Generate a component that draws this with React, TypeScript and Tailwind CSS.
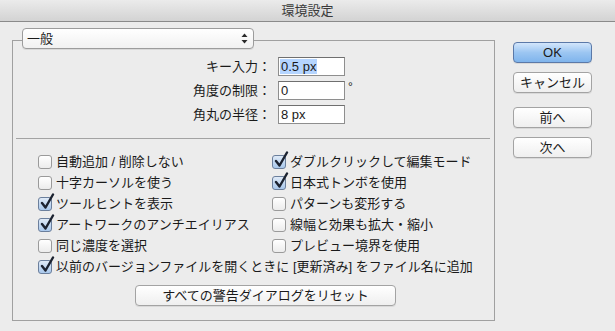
import React from 'react';

const FONT = '"Liberation Sans", "Noto Sans CJK JP", sans-serif';

const Check: React.FC<{ checked?: boolean }> = ({ checked }) => (
  <span
    className={`relative inline-block w-[14px] h-[14px] shrink-0 rounded-[3px] border ${
      checked
        ? 'border-[#6b7f9c] bg-gradient-to-b from-[#dfeaf7] to-[#a9c8ec]'
        : 'border-[#9a9a9a] bg-gradient-to-b from-white to-[#ececec]'
    }`}
  >
    {checked && (
      <svg className="absolute left-[1px] -top-[5px]" width="15" height="17" viewBox="0 0 15 17">
        <path d="M2 10 L5.5 14.5 L13 1.5" fill="none" stroke="#1b2230" strokeWidth="2.4" strokeLinecap="round" strokeLinejoin="round" />
      </svg>
    )}
  </span>
);

const Row: React.FC<{ label: string; checked?: boolean }> = ({ label, checked }) => (
  <div className="flex items-center h-[21px] gap-[4px] whitespace-nowrap">
    <Check checked={checked} />
    <span>{label}</span>
  </div>
);

const Btn: React.FC<{ children: React.ReactNode; primary?: boolean; className?: string }> = ({ children, primary, className }) => (
  <div
    className={`flex items-center justify-center h-[21px] rounded-[4px] border shadow-[0_1px_0_rgba(0,0,0,0.08)] ${
      primary
        ? 'border-[#5b79a8] bg-gradient-to-b from-[#d3e6fb] via-[#9cc6f2] to-[#7fb4ec]'
        : 'border-[#a3a3a3] bg-gradient-to-b from-white to-[#efefef]'
    } ${className ?? ''}`}
  >
    {children}
  </div>
);

const Field: React.FC<{ label: string; value: string; selected?: boolean; degree?: boolean }> = ({ label, value, selected, degree }) => (
  <div className="flex items-center h-[19px]">
    <span className="w-[258px] text-right">{label}</span>
    <div className="ml-[7px] w-[67px] h-[19px] border border-[#8e8e8e] border-t-[#6f6f6f] bg-white flex items-center px-[1px]">
      <span className={`px-[1px] leading-[15px] ${selected ? 'bg-[#b5d5ff]' : ''}`}>{value}</span>
    </div>
    {degree && <span className="ml-[3px] -mt-[8px] text-[12px]">°</span>}
  </div>
);

export default function App() {
  const pairs: [string, boolean, string, boolean][] = [
    ['自動追加 / 削除しない', false, 'ダブルクリックして編集モード', true],
    ['十字カーソルを使う', false, '日本式トンボを使用', true],
    ['ツールヒントを表示', true, 'パターンも変形する', false],
    ['アートワークのアンチエイリアス', true, '線幅と効果も拡大・縮小', false],
    ['同じ濃度を選択', false, 'プレビュー境界を使用', false],
  ];

  return (
    <div
      className="w-[615px] h-[331px] bg-[#ececec] text-[13px] text-[#1a1a1a] overflow-hidden"
      style={{ fontFamily: FONT }}
    >
      {/* Title bar */}
      <div className="h-[22px] flex items-center justify-center bg-gradient-to-b from-[#ebebeb] to-[#d3d3d3] border-b border-[#8a8a8a] text-[#3a3a3a]">
        環境設定
      </div>

      <div className="flex pl-[12px]">
        {/* Group box */}
        <div className="mt-[18px] w-[483px] h-[281px] border border-[#a0a0a0] flex flex-col">
          {/* Popup */}
          <div className="-mt-[13px] ml-[9px] w-[232px] h-[21px] rounded-[4px] border border-[#9c9c9c] bg-gradient-to-b from-white to-[#f1f1f1] flex items-center justify-between pl-[4px] pr-[5px] shadow-[0_1px_0_rgba(0,0,0,0.08)]">
            <span>一般</span>
            <svg width="7" height="11" viewBox="0 0 7 11">
              <path d="M3.5 0.5 L6.5 4 L0.5 4 Z" fill="#2a2a2a" />
              <path d="M3.5 10.5 L6.5 7 L0.5 7 Z" fill="#2a2a2a" />
            </svg>
          </div>

          {/* Fields */}
          <div className="mt-[8px] flex flex-col gap-[5px]">
            <Field label="キー入力：" value="0.5 px" selected />
            <Field label="角度の制限：" value="0" degree />
            <Field label="角丸の半径：" value="8 px" />
          </div>

          <div className="mt-[14px] ml-[3px] w-[474px] h-px bg-[#a3a3a3]" />

          {/* Checkboxes */}
          <div className="mt-[12px] ml-[25px]">
            <div className="grid grid-cols-[234px_auto]">
              {pairs.map(([l, lc, r, rc]) => (
                <React.Fragment key={l}>
                  <Row label={l} checked={lc} />
                  <Row label={r} checked={rc} />
                </React.Fragment>
              ))}
            </div>
            <Row label="以前のバージョンファイルを開くときに [更新済み] をファイル名に追加" checked />
          </div>

          <Btn className="mt-[8px] ml-[122px] w-[261px]">すべての警告ダイアログをリセット</Btn>
        </div>

        {/* Right buttons */}
        <div className="ml-[18px] mt-[20px] w-[79px] flex flex-col">
          <Btn primary>OK</Btn>
          <Btn className="mt-[9px]">キャンセル</Btn>
          <Btn className="mt-[14px]">前へ</Btn>
          <Btn className="mt-[9px]">次へ</Btn>
        </div>
      </div>
    </div>
  );
}
